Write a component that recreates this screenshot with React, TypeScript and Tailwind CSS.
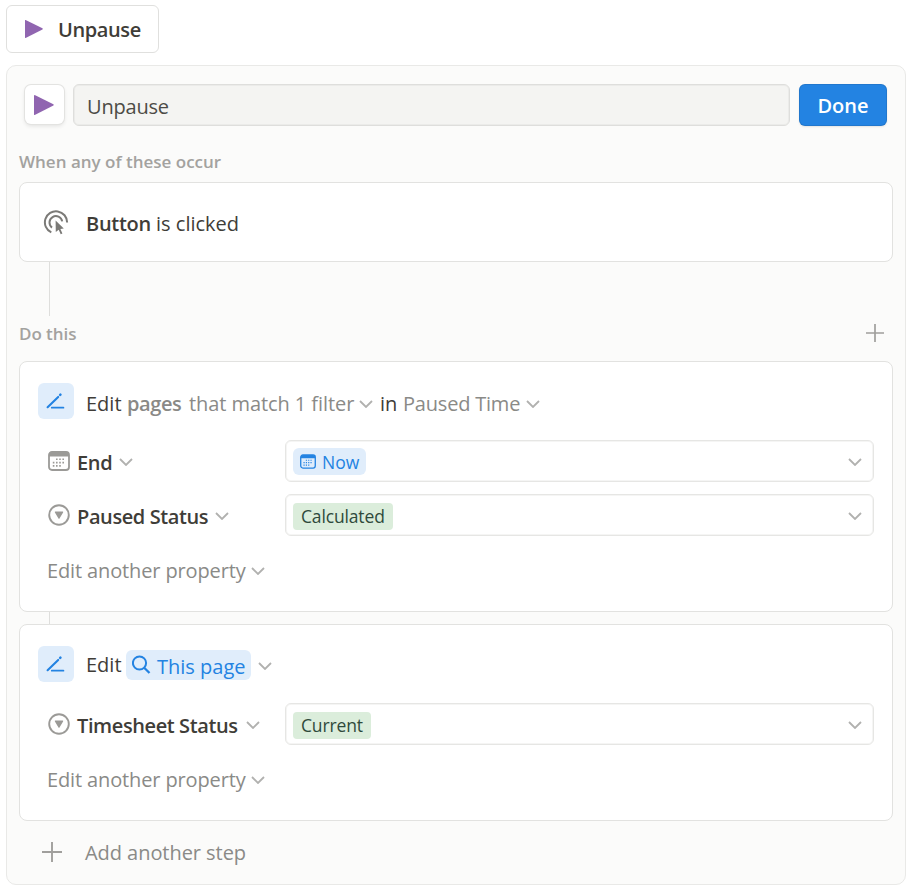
import React from "react";

type IconProps = { className?: string };

const Chevron = ({ className = "" }: IconProps) => (
  <svg width="14" height="8" viewBox="0 0 14 8" fill="none" stroke="#b1b1af" strokeWidth="1.8" className={`shrink-0 ${className}`}>
    <path d="M1 1l6 6 6-6" />
  </svg>
);

const Play = ({ size }: { size: number }) => (
  <svg width={size} height={size} viewBox="0 0 20 20" fill="#9065b0" className="shrink-0">
    <path d="M0 .4Q0-.2.7.1L19.4 9.3Q20 10 19.4 10.6L.7 19.9Q0 20.2 0 19.5Z" />
  </svg>
);

const Plus = ({ size }: { size: number }) => (
  <svg width={size} height={size} viewBox="0 0 20 20" stroke="#a09f9c" strokeWidth="1.9" className="shrink-0">
    <path d="M10 0v20M0 10h20" />
  </svg>
);

const Calendar = ({ className = "" }: IconProps) => (
  <svg viewBox="0 0 22 20" fill="none" className={`shrink-0 ${className}`}>
    <rect x="1" y="1" width="20" height="18" rx="3" stroke="currentColor" strokeWidth="1.8" />
    <path d="M1 5.4V4a3 3 0 0 1 3-3h14a3 3 0 0 1 3 3v1.4z" fill="currentColor" />
    <path
      d="M8 8.3h1.6M11.2 8.3h1.6M14.4 8.3H16M4.8 11.6h1.6M8 11.6h1.6M11.2 11.6h1.6M14.4 11.6H16M4.8 14.9h1.6M8 14.9h1.6M11.2 14.9h1.6"
      stroke="currentColor"
      strokeWidth="1.6"
    />
  </svg>
);

const Status = () => (
  <svg width="22" height="22" viewBox="0 0 22 22" fill="none" className="shrink-0">
    <circle cx="11" cy="11" r="9.8" stroke="#9b9a97" strokeWidth="1.9" />
    <path d="M7.3 7.6h7.4q.8 0 .4.8l-3.6 6.2q-.5.7-1 0L6.9 8.4q-.4-.8.4-.8z" fill="#9b9a97" />
  </svg>
);

const ClickIcon = () => (
  <svg width="26" height="26" viewBox="0 0 26 26" fill="none" className="mt-px shrink-0">
    <path d="M8.3 22.4A11.1 11.1 0 1 1 24.1 12.6" stroke="#7b7a77" strokeWidth="2" />
    <path d="M9 17.6A6.4 6.4 0 1 1 19.2 11.4" stroke="#7b7a77" strokeWidth="2" />
    <path d="M12.6 10.6l8.2 8-3.4.3 2 4.6-1.7.8-2-4.6-2.9 2.3z" fill="#7b7a77" />
  </svg>
);

const EditBadge = () => (
  <div className="flex size-9 shrink-0 items-center justify-center rounded-md bg-[#e0edfb]">
    <svg width="20" height="18" viewBox="0 0 20 18" fill="none" stroke="#2383e2" strokeLinecap="round">
      <path d="M1.6 15.2L12.2 4.9" strokeWidth="2.1" />
      <path d="M14.2 2.9l.2-.2" strokeWidth="2.6" />
      <path d="M5.8 15.7h11.6" strokeWidth="1.8" />
    </svg>
  </div>
);

const Search = () => (
  <svg width="19" height="19" viewBox="0 0 19 19" fill="none" stroke="#2383e2" strokeWidth="2" className="-mt-[2px] shrink-0">
    <circle cx="7.5" cy="8" r="6.6" />
    <path d="M12.2 12.7l5.3 5.3" strokeWidth="2.3" />
  </svg>
);

const Select = ({ children }: { children: React.ReactNode }) => (
  <div className="flex h-[42px] w-[589px] items-center rounded-md border-[1.5px] border-[#e6e6e4] bg-white pr-[11px] pl-[7px] shadow-[inset_0_0_0_1px_#f5f5f4]">
    {children}
    <Chevron className="mt-[2px] ml-auto" />
  </div>
);

const Property = ({ icon, label, value }: { icon: React.ReactNode; label: React.ReactNode; value: React.ReactNode }) => (
  <div className="flex h-[42px] items-center">
    <div className="flex w-[247px] items-center pl-[10px]">
      {icon}
      {label}
    </div>
    <Select>{value}</Select>
  </div>
);

const AnotherProperty = () => (
  <div className="mt-[21px] flex h-[27px] items-center pl-[9px] text-[#8a8a87]">
    <span className="w-[199px] tracking-[-0.13px]">Edit another property</span>
    <Chevron className="ml-[5px]" />
  </div>
);

const Tag = ({ children }: { children: React.ReactNode }) => (
  <div className="mt-[2px] flex h-[27px] items-center rounded bg-[#dbeddb] px-2 text-[17.5px] tracking-[-0.15px] text-[#2f4a3b]">
    {children}
  </div>
);

export default function App() {
  return (
    <div className="h-[888px] w-[916px] overflow-hidden bg-white pt-[5px] pl-[6px] font-['Open_Sans',sans-serif] text-[20px] leading-7 whitespace-nowrap text-[#3f3d38]">
      <button className="flex h-12 w-[153px] items-center rounded-md border border-[#e0e0de] bg-white pl-[18px] font-semibold">
        <Play size={18} />
        <span className="mt-[2px] ml-[15px] tracking-[-0.4px]">Unpause</span>
      </button>

      <section className="mt-3 h-[820px] w-[900px] rounded-[10px] border border-[#e9e9e7] bg-[#fbfbfa] px-3">
        <div className="mt-[18px] flex h-[42px] items-center pl-[6px]">
          <button className="-mt-px flex size-[39px] items-center rounded-md bg-white pl-[9px] shadow-[0_0_0_1px_#e3e3e1,0_2px_4px_#0000001c]">
            <Play size={20} />
          </button>
          <div className="ml-[9px] flex h-[42px] w-[717px] items-center rounded-md border-[1.5px] border-[#dededc] bg-[#f4f4f2] pl-[13px] shadow-[inset_0_0_0_1px_#ebebe9]">
            <span className="mt-[3px] tracking-[-0.2px] text-[#4c4b46]">Unpause</span>
          </div>
          <button className="ml-[9px] h-[42px] w-[88px] rounded-md bg-[#2383e2] pt-px font-semibold text-white shadow-[inset_0_0_0_1px_#0f0f0f1a,0_1px_2px_#0f0f0f1a]">
            Done
          </button>
        </div>

        <div className="mt-[22px] h-[27px] text-[17px] font-semibold text-[#a3a29f]">When any of these occur</div>

        <div className="mt-[7px] flex h-20 w-[874px] items-center rounded-lg border border-[#e2e2e0] bg-white pl-[23px]">
          <ClickIcon />
          <div className="mt-[3px] ml-[17px]">
            <span className="font-semibold tracking-[-0.3px]">Button</span> is clicked
          </div>
        </div>
        <div className="ml-[30px] h-[54px] w-px bg-[#dededc]" />

        <div className="mt-[3px] flex h-7 items-center justify-between pr-[9px]">
          <span className="mt-px text-[17px] font-semibold tracking-[-0.05px] text-[#a3a29f]">Do this</span>
          <Plus size={18} />
        </div>

        <div className="mt-[14px] h-[251px] w-[874px] rounded-lg border border-[#e2e2e0] bg-white pt-[21px] pl-[18px]">
          <div className="flex h-9 items-center">
            <EditBadge />
            <div className="mt-[5px] ml-[12px] flex items-center">
              <span className="w-[41px]">Edit</span>
              <span className="w-[62px] font-semibold tracking-[-0.4px] text-[#8a8986]">pages</span>
              <span className="w-[166px] tracking-[-0.07px] text-[#8a8a87]">that match 1 filter</span>
              <Chevron className="ml-[4px]" />
              <span className="ml-[7px] w-[23px]">in</span>
              <span className="w-[117px] tracking-[-0.2px] text-[#8a8a87]">Paused Time</span>
              <Chevron className="ml-[6px]" />
            </div>
          </div>
          <div className="mt-[21px] flex flex-col gap-3">
            <Property
              icon={<Calendar className="h-5 w-[22px] text-[#9b9a97]" />}
              label={
                <>
                  <span className="mt-[3px] ml-[7px] w-[36px] font-semibold tracking-[-0.3px]">End</span>
                  <Chevron className="mt-[2px] ml-[6px]" />
                </>
              }
              value={
                <div className="mt-px flex h-[27px] w-[73px] items-center rounded-md bg-[#e0edfb] pl-[7px] text-[17.5px] text-[#2383e2]">
                  <Calendar className="-mt-px h-[15px] w-4" />
                  <span className="ml-[6px]">Now</span>
                </div>
              }
            />
            <Property
              icon={<Status />}
              label={
                <>
                  <span className="mt-[3px] ml-[7px] w-[132px] font-semibold tracking-[-0.4px]">Paused Status</span>
                  <Chevron className="mt-[2px] ml-[6px]" />
                </>
              }
              value={<Tag>Calculated</Tag>}
            />
          </div>
          <AnotherProperty />
        </div>
        <div className="ml-[30px] h-3 w-px bg-[#dededc]" />

        <div className="h-[197px] w-[874px] rounded-lg border border-[#e2e2e0] bg-white pt-[21px] pl-[18px]">
          <div className="flex h-9 items-center">
            <EditBadge />
            <span className="mt-[2px] ml-[12px] w-10">Edit</span>
            <div className="mt-[2px] flex h-[30px] w-[125px] items-center rounded-md bg-[#e0edfb] pl-[6px] text-[#2383e2]">
              <Search />
              <span className="mt-[3px] ml-[6px]">This page</span>
            </div>
            <Chevron className="mt-1 ml-[7px]" />
          </div>
          <div className="mt-[21px]">
            <Property
              icon={<Status />}
              label={
                <>
                  <span className="mt-[3px] ml-[7px] w-[163px] font-semibold tracking-[-0.4px]">Timesheet Status</span>
                  <Chevron className="mt-[2px] ml-[6px]" />
                </>
              }
              value={<Tag>Current</Tag>}
            />
          </div>
          <AnotherProperty />
        </div>

        <div className="mt-[17px] flex h-7 items-center pl-[23px] text-[#8a8a87]">
          <Plus size={20} />
          <span className="mt-[2px] ml-[23px] tracking-[-0.05px]">Add another step</span>
        </div>
      </section>
    </div>
  );
}
